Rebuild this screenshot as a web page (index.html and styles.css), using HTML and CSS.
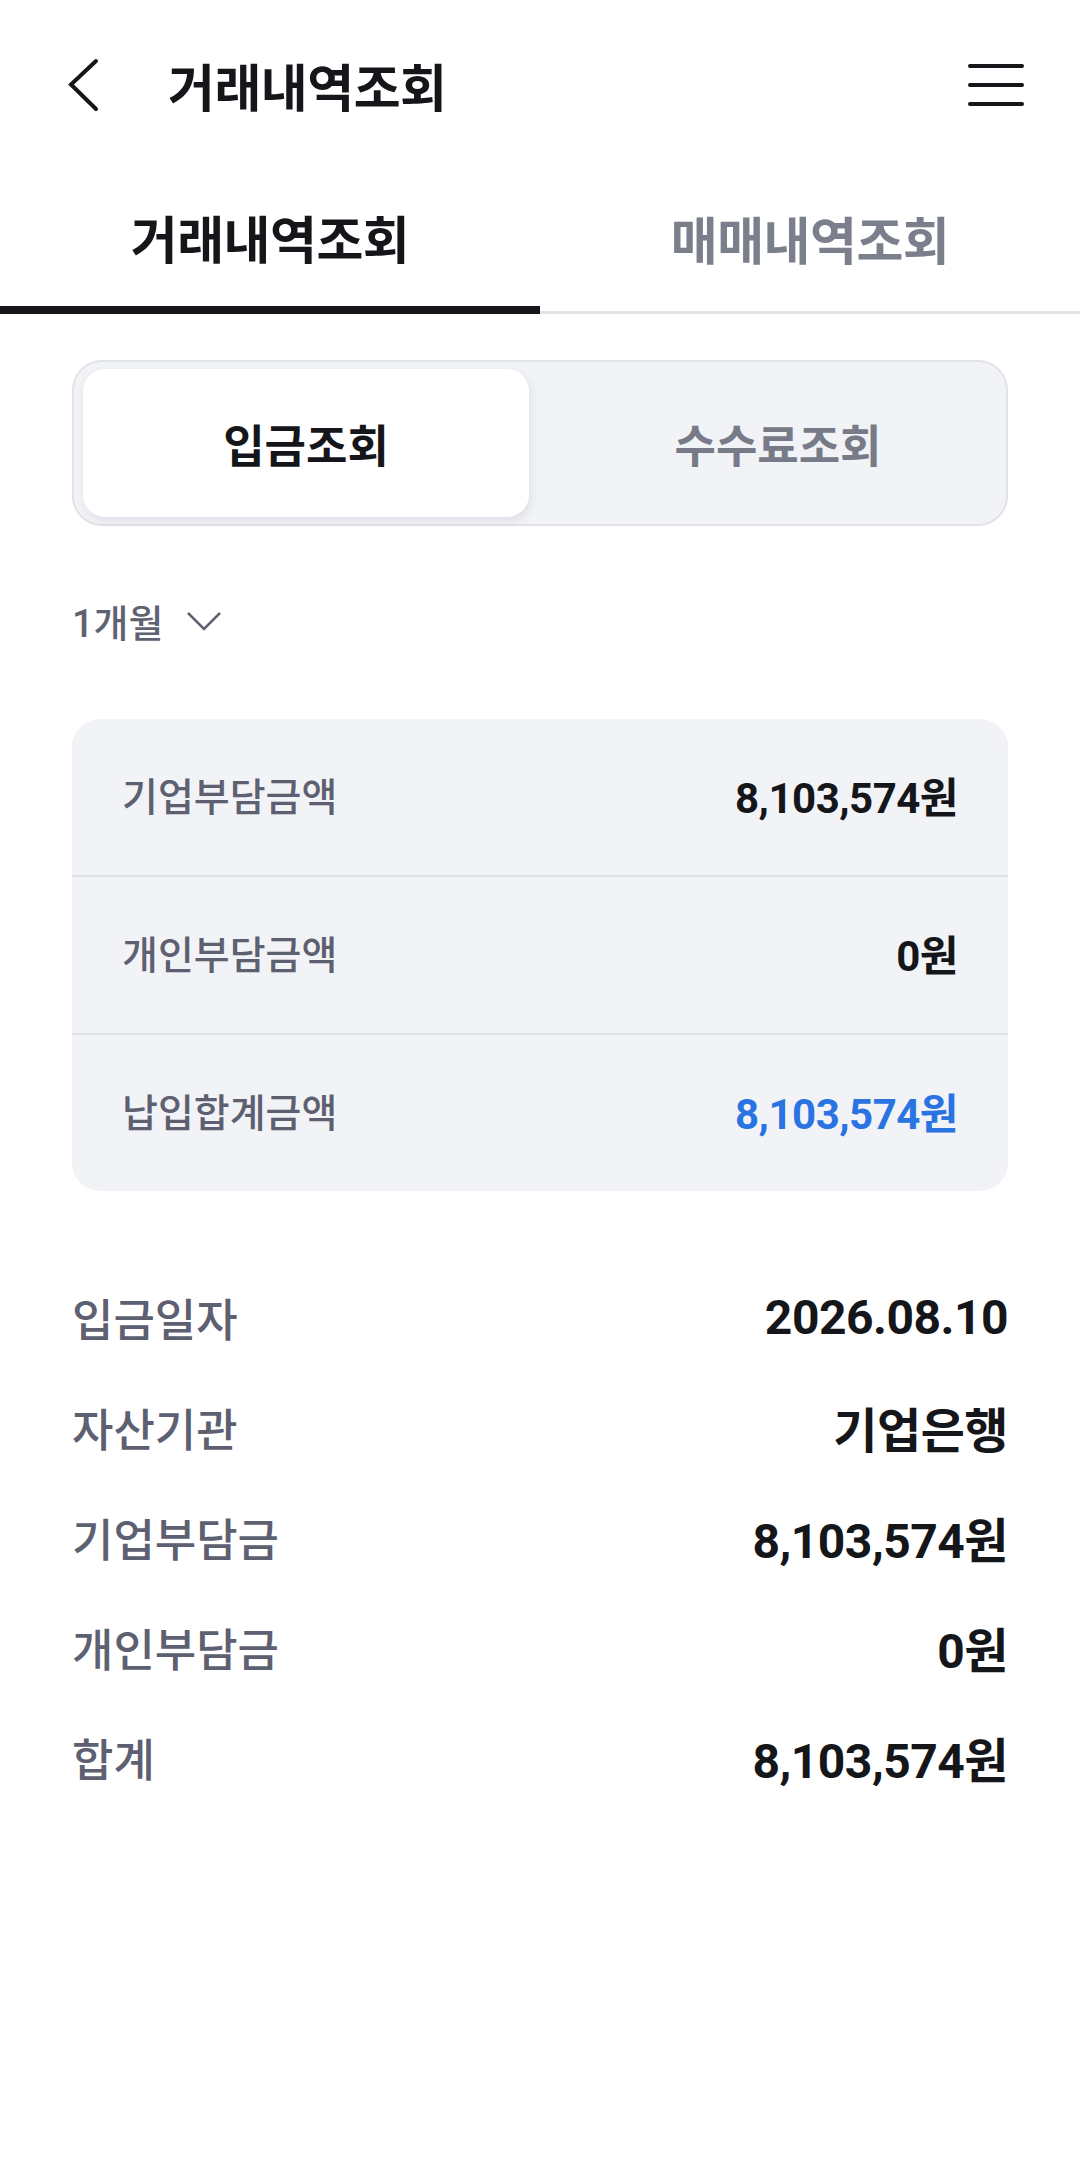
FILE: index.html
```html
<!DOCTYPE html>
<html lang="ko">
<head>
    <meta charset="UTF-8">
    <meta name="viewport" content="width=device-width, initial-scale=1.0">
    <title>거래내역조회</title>
    <link rel="stylesheet" href="styles.css">
</head>
<body>
    <!-- Top bar -->
    <header class="topbar">
        <button class="icon-btn back-btn" aria-label="뒤로">
            <svg width="40" height="60" viewBox="0 0 40 60">
                <path d="M34 6 L9 29.5 L34 54" fill="none" stroke="#15161a" stroke-width="4" stroke-linecap="round" stroke-linejoin="miter"/>
            </svg>
        </button>
        <h1 class="page-title">거래내역조회</h1>
        <button class="icon-btn menu-btn" aria-label="메뉴">
            <svg width="58" height="48" viewBox="0 0 58 48">
                <line x1="3" y1="5" x2="55" y2="5" stroke="#15161a" stroke-width="4" stroke-linecap="round"/>
                <line x1="3" y1="24" x2="55" y2="24" stroke="#15161a" stroke-width="4" stroke-linecap="round"/>
                <line x1="3" y1="43" x2="55" y2="43" stroke="#15161a" stroke-width="4" stroke-linecap="round"/>
            </svg>
        </button>
    </header>

    <!-- Main tabs -->
    <nav class="tabs">
        <div class="tab active">거래내역조회</div>
        <div class="tab">매매내역조회</div>
    </nav>

    <div class="content">
        <!-- Segmented control -->
        <div class="segment">
            <div class="segment-item selected">입금조회</div>
            <div class="segment-item">수수료조회</div>
        </div>

        <!-- Period filter -->
        <div class="period">
            <span>1개월</span>
            <svg width="36" height="22" viewBox="0 0 36 22">
                <path d="M2 3 L18 19 L34 3" fill="none" stroke="#5f6270" stroke-width="2.5"/>
            </svg>
        </div>

        <!-- Summary card -->
        <div class="summary">
            <div class="summary-row">
                <span class="summary-label">기업부담금액</span>
                <span class="summary-value">8,103,574원</span>
            </div>
            <div class="summary-row">
                <span class="summary-label">개인부담금액</span>
                <span class="summary-value">0원</span>
            </div>
            <div class="summary-row">
                <span class="summary-label">납입합계금액</span>
                <span class="summary-value total">8,103,574원</span>
            </div>
        </div>

        <!-- Detail list -->
        <dl class="details">
            <div class="detail-row">
                <dt>입금일자</dt>
                <dd>2026.08.10</dd>
            </div>
            <div class="detail-row">
                <dt>자산기관</dt>
                <dd>기업은행</dd>
            </div>
            <div class="detail-row">
                <dt>기업부담금</dt>
                <dd>8,103,574원</dd>
            </div>
            <div class="detail-row">
                <dt>개인부담금</dt>
                <dd>0원</dd>
            </div>
            <div class="detail-row">
                <dt>합계</dt>
                <dd>8,103,574원</dd>
            </div>
        </dl>
    </div>
</body>
</html>
```

FILE: styles.css
```css
body {
    margin: 0;
    padding: 0;
    background: #ffffff;
    color: #15161a;
    font-family: Roboto, "Noto Sans CJK KR", sans-serif;
}
.icon-btn {
    background: none;
    border: none;
    padding: 0;
    cursor: pointer;
    display: flex;
}

/* top bar */
.topbar {
    height: 160px;
    box-sizing: border-box;
    padding: 10px 0 0 62px;
    display: flex;
    align-items: center;
}
.page-title {
    margin: 0 0 0 66px;
    font-size: 51px;
    font-weight: 700;
    letter-spacing: -0.5px;
    flex: 1;
}
.menu-btn {
    margin-right: 55px;
}

/* tabs */
.tabs {
    display: flex;
    height: 154px;
}
.tab {
    flex: 1;
    display: flex;
    align-items: center;
    justify-content: center;
    font-size: 51px;
    font-weight: 700;
    letter-spacing: -0.5px;
    color: #7b7e8b;
    border-bottom: 3px solid #e2e4ea;
    padding-top: 5px;
}
.tab.active {
    color: #15161a;
    border-bottom: 8px solid #15161a;
    padding-top: 8px;
}

.content {
    padding: 0 72px;
}

/* segmented control */
.segment {
    margin-top: 46px;
    height: 166px;
    box-sizing: border-box;
    border: 2px solid #e1e3e9;
    border-radius: 30px;
    background: #f2f3f7;
    padding: 7px 9px;
    display: grid;
    grid-template-columns: 446px 1fr;
}
.segment-item {
    display: flex;
    align-items: center;
    justify-content: center;
    font-size: 45px;
    font-weight: 700;
    color: #777a87;
}
.segment-item + .segment-item {
    padding-left: 30px;
}
.segment-item.selected {
    background: #ffffff;
    color: #15161a;
    border-radius: 22px;
    box-shadow: 2px 4px 10px rgba(30, 35, 50, 0.09);
}

/* period filter */
.period {
    margin-top: 74px;
    height: 40px;
    display: flex;
    align-items: center;
    gap: 22px;
    font-size: 38px;
    font-weight: 500;
    color: #5f6270;
}
.period svg {
    margin-top: 2px;
}

/* summary card */
.summary {
    margin-top: 79px;
    background: #f2f3f7;
    border-radius: 28px;
}
.summary-row {
    height: 158px;
    box-sizing: border-box;
    display: flex;
    align-items: center;
    justify-content: space-between;
    padding: 0 50px 6px;
    border-top: 2px solid #dfe1e7;
}
.summary-row:first-child {
    border-top: none;
    height: 156px;
}
.summary-label {
    font-size: 39px;
    font-weight: 500;
    color: #5d6070;
}
.summary-value {
    font-size: 42px;
    font-weight: 700;
    color: #15161a;
    letter-spacing: -0.5px;
}
.summary-value.total {
    color: #2a74e2;
}

/* detail list */
.details {
    margin: 71px 0 0;
}
.detail-row {
    height: 110px;
    display: flex;
    align-items: center;
    justify-content: space-between;
}
.detail-row dt {
    font-size: 45px;
    font-weight: 500;
    color: #5d6070;
}
.detail-row dd {
    margin: 0;
    font-size: 48px;
    font-weight: 700;
    letter-spacing: -0.5px;
}
```
